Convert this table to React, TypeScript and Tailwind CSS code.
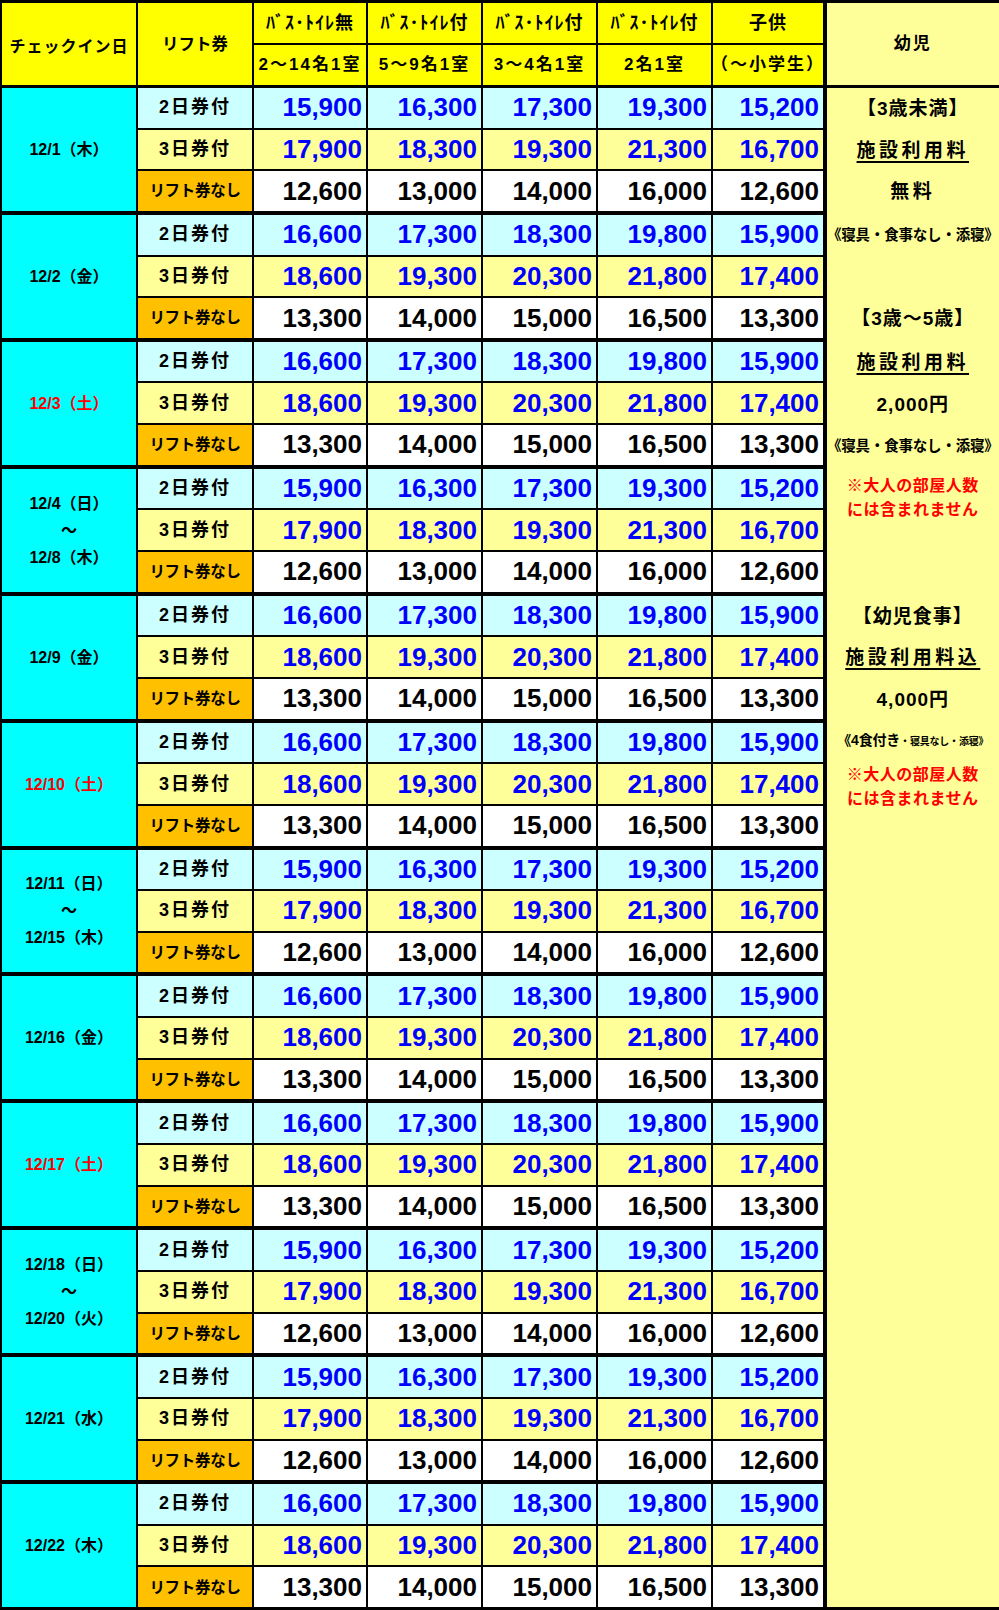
import type { ReactNode } from "react";

const PRICES_A = [
  ["15,900", "16,300", "17,300", "19,300", "15,200"],
  ["17,900", "18,300", "19,300", "21,300", "16,700"],
  ["12,600", "13,000", "14,000", "16,000", "12,600"],
];

const PRICES_B = [
  ["16,600", "17,300", "18,300", "19,800", "15,900"],
  ["18,600", "19,300", "20,300", "21,800", "17,400"],
  ["13,300", "14,000", "15,000", "16,500", "13,300"],
];

type Group = { dates: string[]; red?: boolean; prices: string[][] };

const GROUPS: Group[] = [
  { dates: ["12/1（木）"], prices: PRICES_A },
  { dates: ["12/2（金）"], prices: PRICES_B },
  { dates: ["12/3（土）"], red: true, prices: PRICES_B },
  { dates: ["12/4（日）", "～", "12/8（木）"], prices: PRICES_A },
  { dates: ["12/9（金）"], prices: PRICES_B },
  { dates: ["12/10（土）"], red: true, prices: PRICES_B },
  { dates: ["12/11（日）", "～", "12/15（木）"], prices: PRICES_A },
  { dates: ["12/16（金）"], prices: PRICES_B },
  { dates: ["12/17（土）"], red: true, prices: PRICES_B },
  { dates: ["12/18（日）", "～", "12/20（火）"], prices: PRICES_A },
  { dates: ["12/21（水）"], prices: PRICES_A },
  { dates: ["12/22（木）"], prices: PRICES_B },
];

const ROOM_COLS = [
  { top: "ﾊﾞｽ･ﾄｲﾚ無", bottom: "2～14名1室", w: "w-[112px]" },
  { top: "ﾊﾞｽ･ﾄｲﾚ付", bottom: "5～9名1室", w: "w-[113px]" },
  { top: "ﾊﾞｽ･ﾄｲﾚ付", bottom: "3～4名1室", w: "w-[113px]" },
  { top: "ﾊﾞｽ･ﾄｲﾚ付", bottom: "2名1室", w: "w-[113px]" },
  { top: "子供", bottom: "（～小学生）", w: "w-[110px]" },
];

const ROW_STYLES = [
  { label: "2日券付", labelBg: "bg-[#CCFFFF]", cellBg: "bg-[#CCFFFF]", text: "text-[#0000FF]", labelCls: "text-[18px] tracking-[2px]" },
  { label: "3日券付", labelBg: "bg-[#FFFF99]", cellBg: "bg-[#FFFF99]", text: "text-[#0000FF]", labelCls: "text-[18px] tracking-[2px]" },
  { label: "リフト券なし", labelBg: "bg-[#FFC000]", cellBg: "bg-white", text: "text-black", labelCls: "text-[15.5px] tracking-[-0.3px]" },
];

function Big({ children, u }: { children: ReactNode; u?: boolean }) {
  return (
    <span
      className={
        u
          ? "whitespace-nowrap text-[19px] tracking-[3.5px] underline decoration-[1.5px] underline-offset-[4px]"
          : "whitespace-nowrap text-[19px] tracking-[1px]"
      }
    >
      {children}
    </span>
  );
}

function Note() {
  return (
    <div className="self-start w-full whitespace-nowrap pt-[2px] text-center text-[16px] leading-[24px] tracking-[0.5px] text-[#FF0000]">
      <div>※大人の部屋人数</div>
      <div>には含まれません</div>
    </div>
  );
}

const INFANT: Record<string, ReactNode> = {
  "0-0": <Big>【3歳未満】</Big>,
  "0-1": <Big u>施設利用料</Big>,
  "0-2": <Big><span className="tracking-[3.5px]">無料</span></Big>,
  "1-0": <span className="whitespace-nowrap text-[14.5px] tracking-[-0.2px]">《寝具・食事なし・添寝》</span>,
  "1-2": <Big>【3歳～5歳】</Big>,
  "2-0": <Big u>施設利用料</Big>,
  "2-1": <Big>2,000円</Big>,
  "2-2": <span className="whitespace-nowrap text-[14.5px] tracking-[-0.2px]">《寝具・食事なし・添寝》</span>,
  "3-0": <Note />,
  "4-0": <Big>【幼児食事】</Big>,
  "4-1": <Big u>施設利用料込</Big>,
  "4-2": <Big>4,000円</Big>,
  "5-0": (
    <span className="whitespace-nowrap text-[14px] tracking-[-0.2px]">
      《4食付き<span className="text-[10px]">・寝具なし・添寝》</span>
    </span>
  ),
  "5-1": <Note />,
};

export default function App() {
  return (
    <div className="flex h-[1610px] w-[999px] gap-[4px] bg-black pb-[3px] pl-[2px] pr-[4px] pt-[3px] font-['Liberation_Sans','Noto_Sans_CJK_JP',sans-serif] font-bold text-black">
      {/* price table */}
      <div className="flex w-[821px] flex-col gap-[3px]">
        <div className="flex h-[82px] gap-[2px]">
          <div className="flex w-[134px] items-center justify-center bg-[#FFFF00] pt-[6px] text-[16px] tracking-[1px]">
            チェックイン日
          </div>
          <div className="flex w-[114px] items-center justify-center bg-[#FFFF00] text-[16.5px]">
            リフト券
          </div>
          {ROOM_COLS.map((c, i) => (
            <div key={i} className={`flex ${c.w} flex-col gap-[2px]`}>
              <div className="flex flex-1 items-center justify-center whitespace-nowrap bg-[#FFFF00] text-[18px] tracking-[1px]">
                {c.top}
              </div>
              <div className="flex flex-1 items-center justify-center whitespace-nowrap bg-[#FFFF00] text-[17px] tracking-[2px]">
                {c.bottom}
              </div>
            </div>
          ))}
        </div>

        <div className="flex flex-1 flex-col gap-[4px]">
          {GROUPS.map((g, gi) => (
            <div key={gi} className="flex flex-1 gap-[2px]">
              <div
                className={`flex w-[134px] flex-col items-center justify-center bg-[#00FFFF] text-[16px] leading-[27px] ${
                  g.red ? "text-[#FF0000]" : "text-black"
                }`}
              >
                {g.dates.map((d, di) => (
                  <div key={di}>{d}</div>
                ))}
              </div>
              <div className="flex flex-1 flex-col gap-[2px]">
                {ROW_STYLES.map((r, ri) => (
                  <div key={ri} className="flex flex-1 gap-[2px]">
                    <div
                      className={`flex w-[114px] items-center justify-center whitespace-nowrap ${r.labelBg} ${r.labelCls}`}
                    >
                      {r.label}
                    </div>
                    {g.prices[ri].map((p, pi) => (
                      <div
                        key={pi}
                        className={`flex ${ROOM_COLS[pi].w} items-center justify-end pr-[4px] font-['Liberation_Sans',sans-serif] text-[26px] ${r.cellBg} ${r.text}`}
                      >
                        {p}
                      </div>
                    ))}
                  </div>
                ))}
              </div>
            </div>
          ))}
        </div>
      </div>

      {/* infant column */}
      <div className="flex flex-1 flex-col gap-[3px]">
        <div className="flex h-[82px] items-center justify-center bg-[#FFFF99] text-[17px] tracking-[2px]">
          幼児
        </div>
        <div className="flex flex-1 flex-col gap-[4px] bg-[#FFFF99]">
          {GROUPS.map((_, gi) => (
            <div key={gi} className="flex flex-1 flex-col gap-[2px]">
              {[0, 1, 2].map((ri) => (
                <div
                  key={ri}
                  className="flex flex-1 items-center justify-center pt-[3px] text-center"
                >
                  {INFANT[`${gi}-${ri}`]}
                </div>
              ))}
            </div>
          ))}
        </div>
      </div>
    </div>
  );
}
